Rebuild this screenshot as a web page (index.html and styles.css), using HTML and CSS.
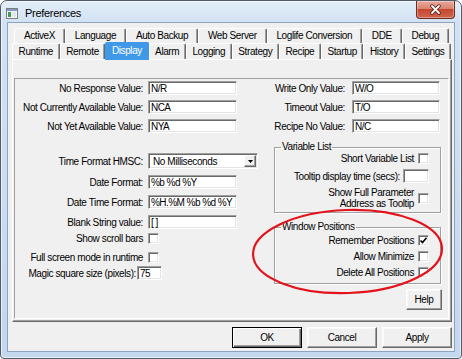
FILE: index.html
```html
<!DOCTYPE html>
<html lang="en">
  <head>
    <meta charset="UTF-8" />
    <title>Preferences</title>
    <link rel="stylesheet" href="styles.css">
  </head>
  <body>
    <div class="window">
      <div class="titlebar">
        <svg class="app-icon" width="12" height="11" viewBox="0 0 12 11">
          <rect x="0.5" y="0.5" width="11" height="10" fill="#f6f6f6" stroke="#7d7d7d" />
          <rect x="1" y="1" width="10" height="2" fill="#7f9cc4" />
          <rect x="2" y="4" width="3" height="5" fill="#3f9b4f" />
          <rect x="6" y="4" width="4" height="5" fill="#dfe6ef" />
        </svg>
        <span class="title">Preferences</span>
        <div class="close-btn">
          <svg width="13" height="11" viewBox="0 0 13 11">
            <path d="M3 2 L10 9 M10 2 L3 9" stroke="#4b1d15" stroke-width="3.4" stroke-linecap="round" />
            <path d="M3 2 L10 9 M10 2 L3 9" stroke="#fff" stroke-width="1.8" stroke-linecap="round" />
          </svg>
        </div>
      </div>

      <div class="client">
        <div class="tabs">
          <div class="tab-row back">
            <div class="tab">ActiveX</div>
            <div class="tab">Language</div>
            <div class="tab">Auto Backup</div>
            <div class="tab">Web Server</div>
            <div class="tab">Loglife Conversion</div>
            <div class="tab">DDE</div>
            <div class="tab">Debug</div>
          </div>
          <div class="tab-row front">
            <div class="tab">Runtime</div>
            <div class="tab">Remote</div>
            <div class="tab selected">Display</div>
            <div class="tab">Alarm</div>
            <div class="tab">Logging</div>
            <div class="tab">Strategy</div>
            <div class="tab">Recipe</div>
            <div class="tab">Startup</div>
            <div class="tab">History</div>
            <div class="tab">Settings</div>
          </div>
        </div>

        <div class="panel">
          <div class="page">
            <div class="col col-left">
              <div class="fields">
                <div class="field">
                  <label for="noResponse">No Response Value:</label>
                  <input class="text-input" type="text" id="noResponse" value="N/R" />
                </div>
                <div class="field">
                  <label for="notCurrent">Not Currently Available Value:</label>
                  <input class="text-input" type="text" id="notCurrent" value="NCA" />
                </div>
                <div class="field">
                  <label for="notYet">Not Yet Available Value:</label>
                  <input class="text-input" type="text" id="notYet" value="NYA" />
                </div>
              </div>

              <div class="fields format">
                <div class="field field-combo">
                  <label>Time Format HMSC:</label>
                  <div class="combo">
                    <span>No Milliseconds</span>
                    <span class="combo-btn">
                      <svg width="5" height="3" viewBox="0 0 5 3"><path d="M0 0 H5 L2.5 3 Z" fill="#000" /></svg>
                    </span>
                  </div>
                </div>
                <div class="field">
                  <label for="dateFormat">Date Format:</label>
                  <input class="text-input" type="text" id="dateFormat" value="%b %d %Y" />
                </div>
                <div class="field">
                  <label for="dateTimeFormat">Date Time Format:</label>
                  <input class="text-input" type="text" id="dateTimeFormat" value="%H.%M %b %d %Y" />
                </div>
                <div class="field">
                  <label for="blankString">Blank String value:</label>
                  <input class="text-input" type="text" id="blankString" value="[ ]" />
                </div>
              </div>

              <div class="checks">
                <div class="field check-row">
                  <label>Show scroll bars</label>
                  <span class="checkbox"></span>
                </div>
                <div class="field check-row">
                  <label>Full screen mode in runtime</label>
                  <span class="checkbox"></span>
                </div>
                <div class="field magic">
                  <label for="magicSize">Magic square size (pixels):</label>
                  <input class="text-input small" type="text" id="magicSize" value="75" />
                </div>
              </div>
            </div>

            <div class="col col-right">
              <div class="fields">
                <div class="field">
                  <label for="writeOnly">Write Only Value:</label>
                  <input class="text-input" type="text" id="writeOnly" value="W/O" />
                </div>
                <div class="field">
                  <label for="timeout">Timeout Value:</label>
                  <input class="text-input" type="text" id="timeout" value="T/O" />
                </div>
                <div class="field">
                  <label for="recipeNo">Recipe No Value:</label>
                  <input class="text-input" type="text" id="recipeNo" value="N/C" />
                </div>
              </div>

              <fieldset class="group group-vars">
                <legend>Variable List</legend>
                <div class="group-body">
                  <div class="group-row">
                    <span>Short Variable List</span>
                    <span class="checkbox"></span>
                  </div>
                  <div class="group-row row-input">
                    <span>Tooltip display time (secs):</span>
                    <input class="text-input tiny" type="text" value="" />
                  </div>
                  <div class="group-row row-multi">
                    <span class="two-line">Show Full Parameter<br />Address as Tooltip</span>
                    <span class="checkbox"></span>
                  </div>
                </div>
              </fieldset>

              <fieldset class="group group-win">
                <legend>Window Positions</legend>
                <div class="group-body">
                  <div class="group-row">
                    <span>Remember Positions</span>
                    <span class="checkbox">
                      <svg width="9" height="9" viewBox="0 0 9 9"><path d="M1.5 4.5 L3.5 6.5 L7.5 1.8" fill="none" stroke="#000" stroke-width="1.7" /></svg>
                    </span>
                  </div>
                  <div class="group-row">
                    <span>Allow Minimize</span>
                    <span class="checkbox"></span>
                  </div>
                  <div class="group-row">
                    <span>Delete All Positions</span>
                    <span class="checkbox"></span>
                  </div>
                </div>
              </fieldset>

              <button class="btn btn-help" type="button">Help</button>
            </div>
          </div>
        </div>

        <div class="buttons">
          <button class="btn btn-default" type="button">OK</button>
          <button class="btn" type="button">Cancel</button>
          <button class="btn" type="button">Apply</button>
        </div>
      </div>

      <!-- red marker drawn over the dialog -->
      <svg class="highlight" width="462" height="359" viewBox="0 0 462 359">
        <ellipse cx="347.5" cy="251.5" rx="94.5" ry="41.5" transform="rotate(-2 347.5 251.5)"
          fill="none" stroke="#e3131c" stroke-width="2.2" />
      </svg>
    </div>
  </body>
</html>
```

FILE: styles.css
```css
* {
  box-sizing: border-box;
  margin: 0;
  padding: 0;
}

body {
  width: 462px;
  height: 359px;
  overflow: hidden;
  background-color: #fff;
  color: #000;
  font-family: "Liberation Sans", Arial, sans-serif;
  font-size: 10px;
  letter-spacing: -0.4px;
}

input,
button {
  font: inherit;
  letter-spacing: inherit;
  color: inherit;
}

/* Window frame */
.window {
  position: relative;
  width: 462px;
  height: 359px;
  display: flex;
  flex-direction: column;
  padding: 0 6px 6px;
  border: 1px solid #4e5c6d;
  border-radius: 7px 7px 4px 4px;
  background: linear-gradient(#e4eefa 0, #d3e2f3 20px, #c3d7ee 100%);
  box-shadow: inset 0 0 0 1px rgba(255, 255, 255, 0.6);
}

.titlebar {
  height: 21px;
  margin: 0 -6px;
  padding: 0 6px 0 5px;
  display: flex;
  align-items: flex-start;
}

.app-icon {
  margin-top: 7px;
  flex: none;
}

.title {
  margin: 5px 0 0 7px;
  font-size: 11px;
  letter-spacing: -0.3px;
  line-height: 14px;
}

.close-btn {
  margin-left: auto;
  width: 39px;
  height: 18px;
  display: flex;
  align-items: center;
  justify-content: center;
  border: 1px solid #6d2b20;
  border-top: none;
  border-radius: 0 0 4px 4px;
  background: linear-gradient(#eaa99b 0, #da8472 45%, #c5472f 50%, #d0654c 100%);
  box-shadow: inset 0 0 0 1px rgba(255, 255, 255, 0.35);
}

.client {
  flex: 1;
  display: flex;
  flex-direction: column;
  background-color: #f0f0f0;
  border: 1px solid #8da3be;
}

/* Tabs */
.tabs {
  margin-top: 5px;
  padding-left: 4px;
}

.tab-row {
  display: flex;
}

.tab-row.back {
  margin-left: 2px;
  width: 435px;
  height: 15px;
}

.tab-row.front {
  width: 439px;
  height: 16px;
}

.tab {
  flex: 1 1 auto;
  padding: 0 3px;
  text-align: center;
  white-space: nowrap;
  border: 1px solid;
  border-color: #fff #696969 transparent #fff;
  border-bottom: none;
  border-radius: 2px 2px 0 0;
  box-shadow: inset -1px 0 #a0a0a0;
  line-height: 14px;
}

.front .tab {
  line-height: 15px;
}

.tab.selected {
  position: relative;
  z-index: 1;
  height: 18px;
  margin-top: -1px;
  background-color: #3f99e8;
  color: #fff;
  line-height: 16px;
  border-color: #3f99e8;
  box-shadow: none;
}

/* Tab page */
.panel {
  margin-left: 4px;
  width: 440px;
  height: 263px;
  padding: 18px 0 0 1px;
  border: 1px solid;
  border-color: #fff #696969 #696969 #fff;
  box-shadow: inset -1px -1px #a0a0a0;
}

.page {
  width: 435px;
  height: 241px;
  display: flex;
  border: 1px solid;
  border-color: #a0a0a0 #fff #fff #a0a0a0;
}

.col {
  display: flex;
  flex-direction: column;
}

.col-left {
  width: 247px;
}

.col-right {
  width: 186px;
}

.fields {
  display: flex;
  flex-direction: column;
  gap: 5px;
  padding-top: 2px;
}

.field {
  display: flex;
  align-items: center;
  height: 14px;
}

.field label {
  flex: none;
  text-align: right;
  white-space: nowrap;
}

.col-left .field label {
  width: 128px;
  margin-right: 5px;
}

.col-right .field label {
  width: 83px;
  margin-right: 7px;
}

.text-input {
  flex: none;
  width: 89px;
  height: 14px;
  padding: 0 2px;
  letter-spacing: -0.55px;
  background-color: #fff;
  border: 1px solid;
  border-color: #a0a0a0 #fff #fff #a0a0a0;
  box-shadow: inset 1px 1px #696969, inset -1px -1px #e3e3e3;
  outline: none;
}

.col-right .text-input {
  width: 88px;
}

.format {
  margin-top: 20px;
  gap: 6px;
  padding-top: 0;
}

.field-combo {
  height: 16px;
}

.combo {
  width: 110px;
  height: 16px;
  display: flex;
  align-items: center;
  padding: 1px 1px 1px 4px;
  background-color: #fff;
  border: 1px solid;
  border-color: #a0a0a0 #fff #fff #a0a0a0;
  box-shadow: inset 1px 1px #696969, inset -1px -1px #e3e3e3;
}

.combo-btn {
  margin-left: auto;
  width: 12px;
  height: 12px;
  display: flex;
  align-items: center;
  justify-content: center;
  background-color: #f0f0f0;
  border: 1px solid;
  border-color: #fff #696969 #696969 #fff;
  box-shadow: inset -1px -1px #a0a0a0;
}

.checks {
  margin-top: 4px;
  display: flex;
  flex-direction: column;
}

.check-row {
  height: 11px;
}

.check-row + .check-row {
  margin-top: 8px;
}

.magic {
  margin-top: 3px;
}

.col-left .magic label {
  width: 121px;
  margin-right: 1px;
}

.col-left .text-input.small {
  width: 25px;
}

.checkbox {
  flex: none;
  width: 11px;
  height: 11px;
  display: flex;
  align-items: center;
  justify-content: center;
  background-color: #fff;
  border: 1px solid;
  border-color: #a0a0a0 #fff #fff #a0a0a0;
  box-shadow: inset 1px 1px #696969, inset -1px -1px #e3e3e3;
}

/* Group boxes */
.group {
  margin-left: 12px;
  width: 167px;
  min-width: 0;
  padding: 0 11px 3px 0;
  border: 1px solid #a0a0a0;
  box-shadow: inset 1px 1px #fff, 1px 1px #fff;
}

.group legend {
  margin-left: 6px;
  padding: 0 1px;
  line-height: 12px;
}

.group-vars {
  margin-top: 8px;
}

.group-win {
  margin-top: 8px;
  padding-top: 2px;
  padding-bottom: 5px;
}

.group-body {
  display: flex;
  flex-direction: column;
}

.group-row {
  display: flex;
  justify-content: flex-end;
  align-items: center;
  gap: 4px;
  height: 11px;
  white-space: nowrap;
}

.group-win .group-row + .group-row {
  margin-top: 5px;
}

.row-input {
  margin-top: 5px;
  height: 14px;
  gap: 3px;
}

.col-right .text-input.tiny {
  width: 26px;
}

.row-multi {
  margin-top: 4px;
  height: 22px;
}

.two-line {
  text-align: right;
  line-height: 11px;
}

/* Buttons */
.btn {
  height: 21px;
  background-color: #f0f0f0;
  border: 1px solid;
  border-color: #fff #696969 #696969 #fff;
  box-shadow: inset -1px -1px #a0a0a0, inset 1px 1px #f8f8f8;
}

.btn-default {
  border-color: #000;
  box-shadow: inset 1px 1px #fff, inset -1px -1px #696969, inset -2px -2px #a0a0a0;
}

.btn-help {
  margin-top: 5px;
  margin-right: 6px;
  align-self: flex-end;
  width: 36px;
}

.buttons {
  margin-top: 5px;
  padding-right: 2px;
  display: flex;
  justify-content: flex-end;
  gap: 5px;
}

.buttons .btn {
  width: 70px;
}

.highlight {
  position: absolute;
  top: -1px;
  left: -1px;
  pointer-events: none;
}
```
